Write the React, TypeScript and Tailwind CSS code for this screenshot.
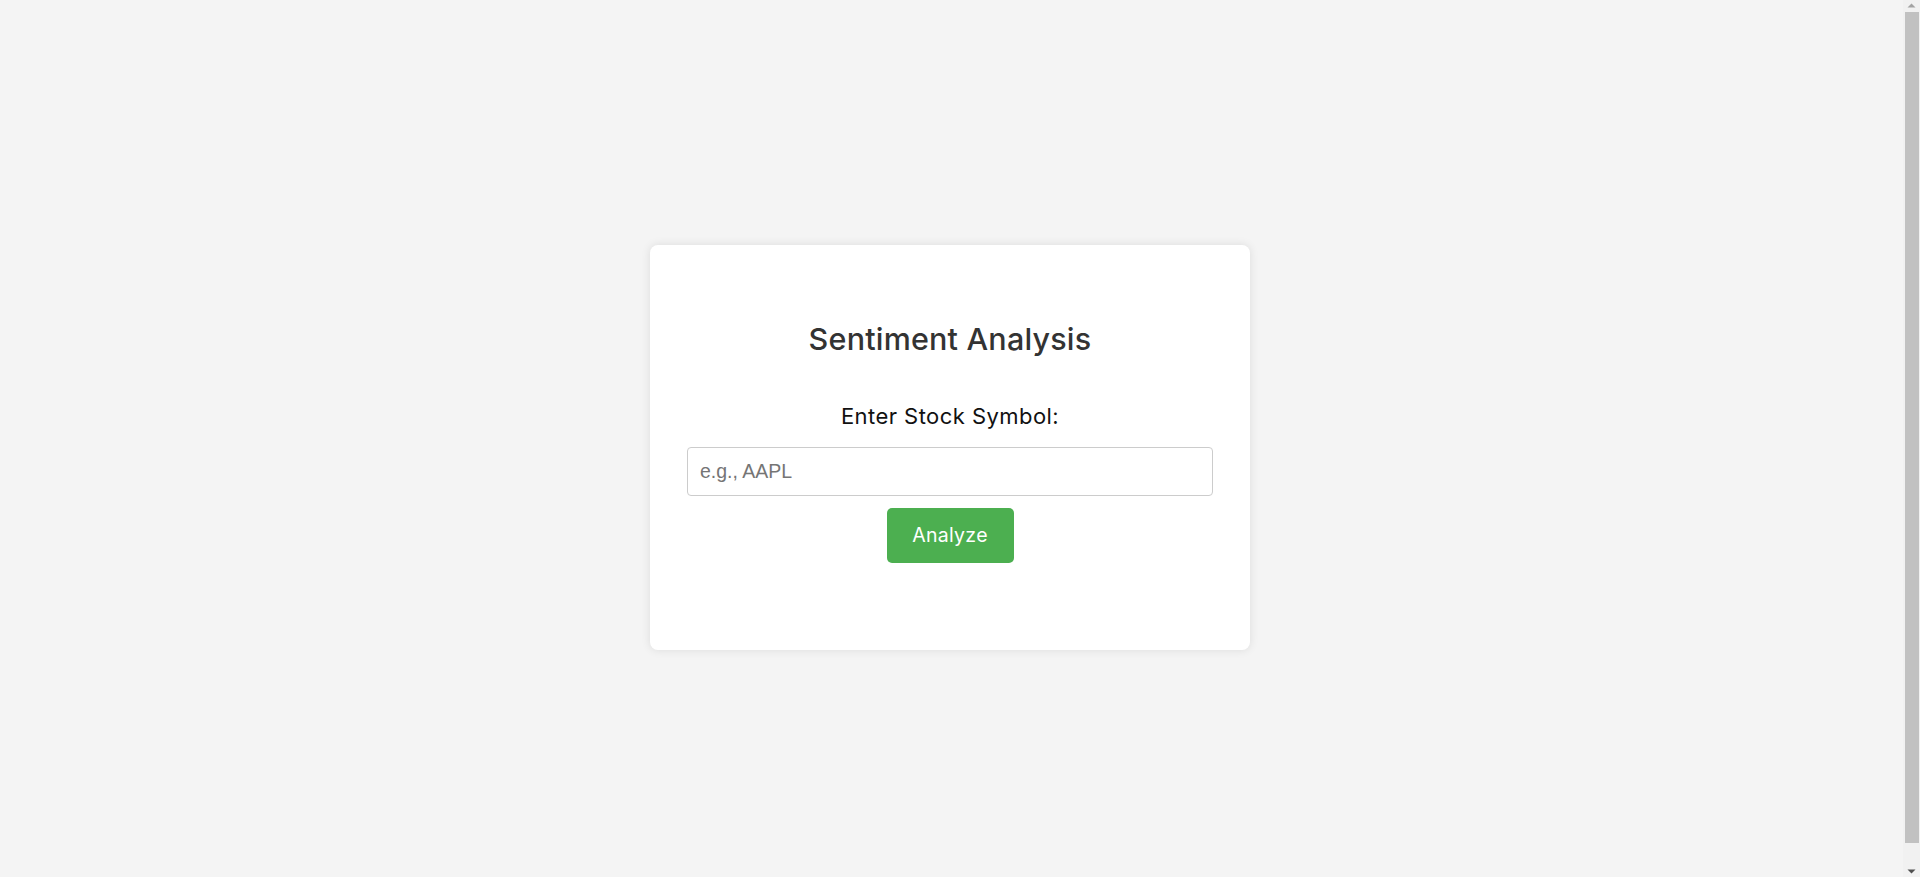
import React from "react";

export default function App() {
  return (
    <div className="h-screen overflow-hidden flex bg-[#f4f4f4]" style={{ fontFamily: "Inter, 'Noto Sans', sans-serif" }}>
      <div className="flex-1 flex items-center justify-center pt-[18px] pr-[3px]">
        <div className="w-[600px] h-[405px] bg-white rounded-lg shadow-[0_0_10px_rgba(0,0,0,0.1)] px-[37px] pt-[76px] flex flex-col items-center">
          <h2 className="text-[30.5px] leading-[36px] font-medium text-[#333] tracking-[0.2px]">
            Sentiment Analysis
          </h2>
          <label className="mt-[45px] text-[22px] leading-[28px] text-[#111] tracking-[0.45px]">Enter Stock Symbol:</label>
          <input
            type="text"
            placeholder="e.g., AAPL"
            className="mt-[17px] w-full h-[49px] border border-[#ccc] rounded-[4px] px-[12px] text-[19.5px] placeholder:text-[#757575] outline-none font-['Liberation_Sans',Arial,sans-serif]"
          />
          <button className="mt-[12px] w-[127px] h-[55px] bg-[#4caf50] text-white text-[19.5px] tracking-[0.3px] rounded-[5px]">
            Analyze
          </button>
        </div>
      </div>
      <div className="w-[17px] h-full bg-[#f1f1f1] flex flex-col items-center">
        <svg width="17" height="12" viewBox="0 0 17 12" className="shrink-0">
          <path d="M4.5 7.5 L8.5 3.5 L12.5 7.5 Z" fill="#a3a3a3" />
        </svg>
        <div className="w-[14px] h-[831px] bg-[#c1c1c1] shrink-0" />
        <div className="flex-1" />
        <svg width="17" height="12" viewBox="0 0 17 12" className="shrink-0">
          <path d="M4.5 4.5 L12.5 4.5 L8.5 8.5 Z" fill="#505050" />
        </svg>
      </div>
    </div>
  );
}
